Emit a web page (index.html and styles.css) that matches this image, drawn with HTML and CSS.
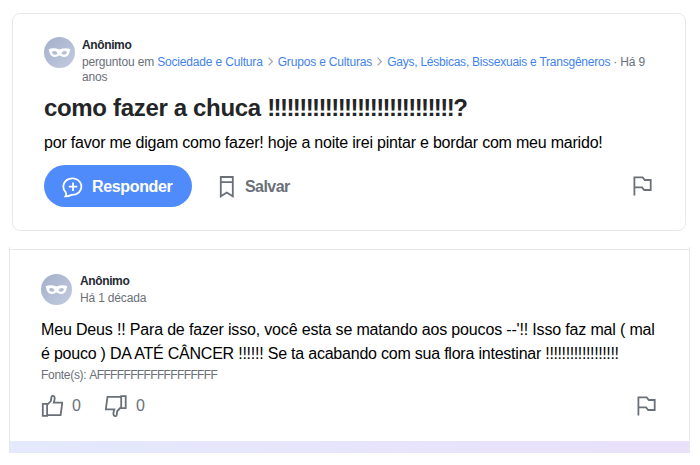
FILE: index.html
```html
<!DOCTYPE html>
<html lang="pt-BR">
<head>
  <meta charset="UTF-8">
  <title>como fazer a chuca</title>
  <link rel="stylesheet" href="styles.css">
</head>
<body>
  <!-- Pergunta -->
  <div class="question">
    <div class="header">
      <svg class="avatar" viewBox="0 0 31 31">
        <defs>
          <linearGradient id="avatarBg" x1="0" y1="0" x2="1" y2="1">
            <stop offset="0" stop-color="#a3afca"/>
            <stop offset="1" stop-color="#c3cbe0"/>
          </linearGradient>
        </defs>
        <circle cx="15.5" cy="15.5" r="15.5" fill="url(#avatarBg)"/>
        <path fill="#fff" fill-rule="evenodd" d="M4.500 12.400c3-1.500 7.200-1.300 11 0 3.800-1.300 8-1.500 11 0-.7 1.200-.8 2-1.200 3.500-.8 2.900-2.700 4-5.300 4-2.400 0-3.200-1.500-4.500-1.500s-2.100 1.500-4.500 1.500c-2.600 0-4.500-1.100-5.300-4-.4-1.500-.5-2.300-1.200-3.500zM8 15.400c1 2.700 3.800 2.900 5.600 1-1.200-2.700-4.200-3-5.600-1zM23 15.400c-1 2.700-3.800 2.900-5.600 1 1.200-2.700 4.200-3 5.600-1z"/>
      </svg>
      <div class="meta">
        <div class="name">Anônimo</div>
        <div class="path">perguntou em <a class="link">Sociedade e Cultura</a><svg class="chevron" viewBox="0 0 5 9"><path d="M.6.6l3.700 3.900L.6 8.400"/></svg><a class="link">Grupos e Culturas</a><svg class="chevron" viewBox="0 0 5 9"><path d="M.6.6l3.700 3.900L.6 8.400"/></svg><a class="link last">Gays, Lésbicas, Bissexuais e Transgêneros</a> · Há 9 anos</div>
      </div>
    </div>
    <h1 class="title">como fazer a chuca <span class="marks">!!!!!!!!!!!!!!!!!!!!!!!!!!!!!</span>?</h1>
    <p class="details">por favor me digam como fazer! hoje a noite irei pintar e bordar com meu marido!</p>
    <div class="actions">
      <button class="answer-btn" type="button">
        <svg class="icon" viewBox="0 0 22 22"><path d="M3.500 16A9 8.300 0 1 1 9.500 18.900c-1.600.9-3.800 1.400-6 1.400.9-1.200 1-2.700 0-4.300zM11 6.500v8.400M6.800 10.700h8.400"/></svg>
        Responder
      </button>
      <button class="save-btn" type="button">
        <svg class="icon" viewBox="0 0 22 22"><path d="M4.800 1h12v19.300l-6-3.800-6 3.800zM4.800 6.200h12"/></svg>
        Salvar
      </button>
      <svg class="icon flag" viewBox="0 0 22 22"><path d="M2.400 20.500V2.400h8.300l2.100 2.600h5.900v10h-6.500l-2.100-2.600H2.400"/></svg>
    </div>
  </div>

  <!-- Resposta -->
  <div class="reply">
    <div class="reply-body">
      <div class="header">
        <svg class="avatar" viewBox="0 0 31 31">
          <circle cx="15.5" cy="15.5" r="15.5" fill="url(#avatarBg)"/>
          <path fill="#fff" fill-rule="evenodd" d="M4.500 12.400c3-1.500 7.200-1.300 11 0 3.800-1.300 8-1.500 11 0-.7 1.200-.8 2-1.200 3.500-.8 2.900-2.700 4-5.300 4-2.400 0-3.200-1.500-4.500-1.500s-2.100 1.500-4.500 1.500c-2.600 0-4.500-1.100-5.300-4-.4-1.500-.5-2.300-1.200-3.500zM8 15.400c1 2.700 3.800 2.900 5.600 1-1.200-2.700-4.200-3-5.600-1zM23 15.400c-1 2.700-3.800 2.900-5.600 1 1.200-2.700 4.200-3 5.600-1z"/>
        </svg>
        <div class="meta reply-meta">
          <div class="name">Anônimo</div>
          <div class="date">Há 1 década</div>
        </div>
      </div>
      <p class="text">
        <span class="line">Meu Deus !! Para de fazer isso, você esta se matando aos poucos --'!! Isso faz mal ( mal</span>
        <span class="line second">é pouco ) DA ATÉ CÂNCER !!!!!! Se ta acabando com sua flora intestinar <span class="text-marks">!!!!!!!!!!!!!!!!!!</span></span>
      </p>
      <div class="source">Fonte(s): <span class="source-text">AFFFFFFFFFFFFFFFFFF</span></div>
      <div class="votes">
        <svg class="icon" viewBox="0 0 22 22"><path d="M1.800 8.800h4.300v12H1.800zM6.100 10l3.700-4 .7-4.200c.3-1.500 3.200-1.200 3.200 1.300 0 1.700-.4 3-.9 4.500h8.500l-1.700 12.600H6.100"/></svg>
        <span class="count">0</span>
        <svg class="icon down" viewBox="0 0 22 22"><path d="M1.300 8.800h4.500v12H1.300zM5.800 10l3.900-4 .7-4.200c.3-1.500 3.200-1.200 3.200 1.300 0 1.700-.4 3-.9 4.500h8.500l-1.700 12.600H5.800"/></svg>
        <span class="count">0</span>
        <svg class="icon flag" viewBox="0 0 22 22"><path d="M2.400 20.500V2.400h8.300l2.100 2.600h5.900v10h-6.500l-2.100-2.600H2.400"/></svg>
      </div>
    </div>
    <div class="strip"></div>
  </div>
</body>
</html>
```

FILE: styles.css
```css
body {
  margin: 0;
  padding: 13px 10px 0 12px;
  background: #fff;
  color: #1d2228;
  font-family: "Liberation Sans", Arial, sans-serif;
}
.question {
  box-sizing: border-box;
  width: 674px;
  height: 218px;
  padding: 23px 31px 0;
  border: 1px solid #e6e8ec;
  border-radius: 8px;
}
.header {
  display: flex;
}
.avatar {
  width: 31px;
  height: 31px;
  flex: none;
}
.meta {
  margin-left: 7px;
  font-size: 12px;
  line-height: 16px;
  letter-spacing: -0.17px;
  color: #6a7078;
}
.name {
  font-weight: bold;
  letter-spacing: -0.38px;
  color: #232a31;
}
.path {
  padding-top: 2px;
  line-height: 15px;
}
.link {
  color: #3f83ec;
}
.last {
  letter-spacing: -0.24px;
}
.chevron {
  width: 5px;
  height: 9px;
  margin: 0 5px;
  fill: none;
  stroke: #a5a9b0;
  stroke-width: 1.2;
}
.title {
  margin: 8px 0 0;
  color: #232527;
  font-size: 24px;
  line-height: 30px;
  letter-spacing: -0.33px;
  white-space: nowrap;
}
.marks {
  letter-spacing: -1.58px;
}
.details {
  margin: 9px 0 0;
  font-size: 16px;
  line-height: 22px;
  letter-spacing: -0.21px;
  color: #000;
  white-space: nowrap;
}
.actions {
  display: flex;
  align-items: center;
  margin-top: 11px;
}
button {
  display: flex;
  align-items: center;
  padding: 0;
  border: none;
  background: none;
  font-family: inherit;
  font-size: 16px;
  font-weight: bold;
}
.answer-btn {
  box-sizing: border-box;
  width: 148px;
  height: 42px;
  padding: 2px 0 0 18px;
  gap: 8px;
  border-radius: 21px;
  background: #508bfb;
  color: #fff;
  letter-spacing: -0.35px;
}
.save-btn {
  padding-top: 2px;
  margin-left: 24px;
  gap: 7px;
  color: #6a7078;
  letter-spacing: -0.55px;
}
.icon {
  width: 22px;
  height: 22px;
  flex: none;
  fill: none;
  stroke: currentColor;
  stroke-width: 1.8;
}
.flag {
  margin-left: auto;
  color: #6a7078;
}
.reply {
  box-sizing: border-box;
  width: 681px;
  height: 206px;
  padding-top: 2px;
  margin: 16px 0 0 -3px;
  border: 1px solid #e6e8ec;
  border-top: none;
  border-bottom: none;
}
.reply-body {
  box-sizing: border-box;
  height: 192px;
  padding: 24px 31px 0;
  border-top: 1px solid #e6e8ec;
}
.reply-meta {
  margin: -1px 0 0 8px;
}
.date {
  padding-top: 1px;
}
.text {
  margin: 12px 0 0;
  font-size: 16px;
  line-height: 23.5px;
  letter-spacing: -0.165px;
  color: #000;
}
.line {
  display: block;
  white-space: nowrap;
}
.second {
  letter-spacing: -0.22px;
}
.text-marks {
  letter-spacing: -0.38px;
}
.source {
  margin-top: 2px;
  font-size: 12px;
  line-height: 16px;
  letter-spacing: -0.3px;
  color: #6a7078;
}
.source-text {
  letter-spacing: -0.64px;
}
.votes {
  display: flex;
  align-items: center;
  margin-top: 12px;
  font-size: 16px;
  color: #6a7078;
}
.count {
  margin-left: 9px;
}
.down {
  margin-left: 24px;
  transform: rotate(180deg);
}
.strip {
  height: 12px;
  background: linear-gradient(to right, #e4e9fc, #e9e0fa);
}
```
